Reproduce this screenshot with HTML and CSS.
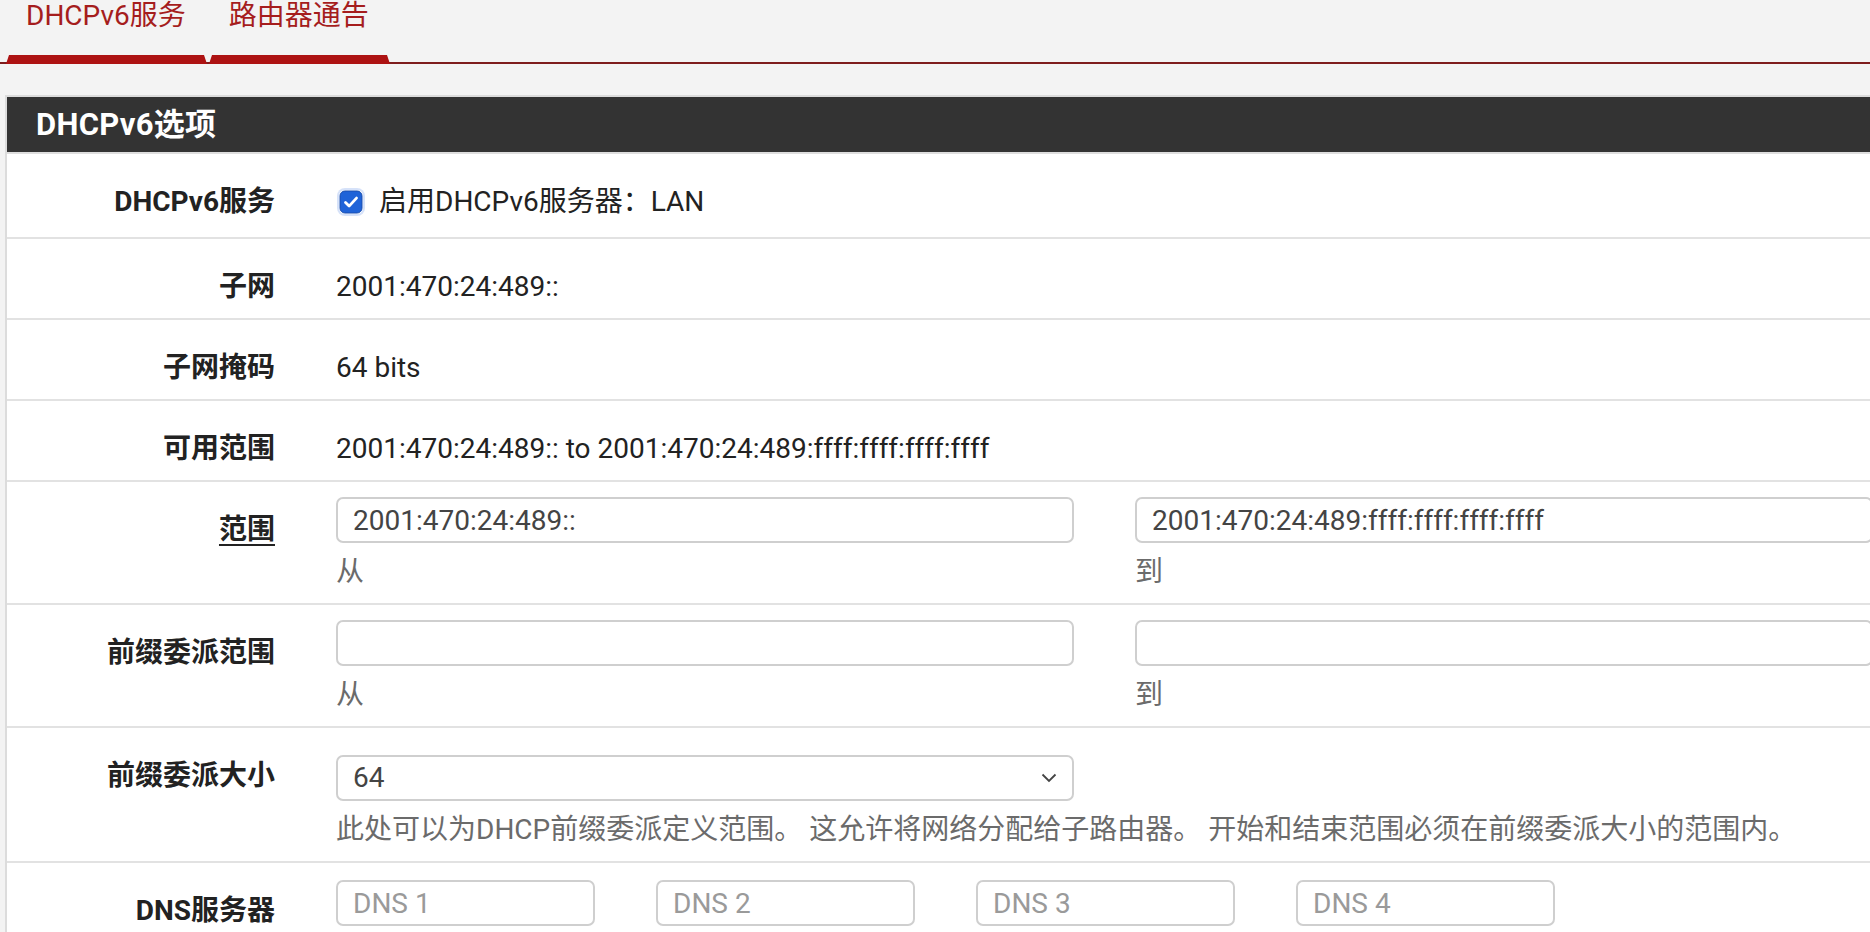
FILE: index.html
```html
<!DOCTYPE html>
<html lang="zh-CN">
<head>
<meta charset="utf-8">
<title>DHCPv6服务</title>
<link rel="stylesheet" href="styles.css">
</head>
<body>
<div class="page">
  <ul class="tabs">
    <li class="tab"><a href="#">DHCPv6服务</a></li>
    <li class="tab"><a href="#">路由器通告</a></li>
  </ul>

  <section class="panel">
    <header class="panel-heading"><h2>DHCPv6选项</h2></header>
    <div class="panel-body">
      <div class="row row-check">
        <div class="label">DHCPv6服务</div>
        <div class="value">
          <label class="check">
            <span class="box"><svg viewBox="0 0 24 24" width="24" height="24"><rect x="1" y="1" width="22" height="22" rx="5" fill="#1f63d8" stroke="#1a4fb0" stroke-width="1"/><path d="M6.5 12.5l3.6 3.6 7.4-8" fill="none" stroke="#fff" stroke-width="2.8" stroke-linecap="round" stroke-linejoin="round"/></svg></span>
            <span>启用DHCPv6服务器：LAN</span>
          </label>
        </div>
      </div>
      <div class="row">
        <div class="label">子网</div>
        <div class="value static">2001:470:24:489::</div>
      </div>
      <div class="row">
        <div class="label">子网掩码</div>
        <div class="value static">64 bits</div>
      </div>
      <div class="row">
        <div class="label">可用范围</div>
        <div class="value static">2001:470:24:489:: to 2001:470:24:489:ffff:ffff:ffff:ffff</div>
      </div>
      <div class="row">
        <div class="label"><span class="link">范围</span></div>
        <div class="value pair">
          <div class="field">
            <input class="input" type="text" value="2001:470:24:489::">
            <div class="help">从</div>
          </div>
          <div class="field">
            <input class="input" type="text" value="2001:470:24:489:ffff:ffff:ffff:ffff">
            <div class="help">到</div>
          </div>
        </div>
      </div>
      <div class="row">
        <div class="label">前缀委派范围</div>
        <div class="value pair">
          <div class="field">
            <input class="input" type="text" value="">
            <div class="help">从</div>
          </div>
          <div class="field">
            <input class="input" type="text" value="">
            <div class="help">到</div>
          </div>
        </div>
      </div>
      <div class="row">
        <div class="label">前缀委派大小</div>
        <div class="value single select-wrap">
          <div class="field">
            <div class="select">
              <span>64</span>
              <svg class="chev" viewBox="0 0 16 10" width="16" height="10"><path d="M1.5 1.5l6.5 6.5 6.5-6.5" fill="none" stroke="#444" stroke-width="1.8"/></svg>
            </div>
            <div class="help wide">此处可以为DHCP前缀委派定义范围。 这允许将网络分配给子路由器。 开始和结束范围必须在前缀委派大小的范围内。</div>
          </div>
        </div>
      </div>
      <div class="row">
        <div class="label">DNS服务器</div>
        <div class="value quad">
          <input class="input" type="text" placeholder="DNS 1">
          <input class="input" type="text" placeholder="DNS 2">
          <input class="input" type="text" placeholder="DNS 3">
          <input class="input" type="text" placeholder="DNS 4">
        </div>
      </div>
    </div>
  </section>
</div>
</body>
</html>
```
FILE: styles.css
```css
html, body {
  margin: 0;
  padding: 0;
  overflow: hidden;
  background: #f3f3f3;
}
body {
  font-family: "Roboto", "Noto Sans CJK SC", sans-serif;
  font-size: 28px;
  line-height: 40px;
  color: #222;
}
.page {
  width: 1900px;
}

/* tabs */
.tabs {
  list-style: none;
  margin: 0;
  padding: 0 0 0 6px;
  display: flex;
  border-bottom: 2px solid #7e1c1c;
}
.tab {
  margin-right: 2px;
  margin-bottom: -2px;
}
.tab a {
  display: block;
  padding: 0 18px 23px 17px;
  line-height: 32px;
  color: #a51d1d;
  text-decoration: none;
  border-bottom: 9px solid #ad1212;
  border-left: 3px solid transparent;
  border-right: 3px solid transparent;
}

/* panel */
.panel {
  margin: 31px 0 0 5px;
  border-top: 2px solid #dcdcdc;
  border-left: 2px solid #dcdcdc;
  background: #fff;
}
.panel-heading {
  background: #333;
  height: 55px;
  display: flex;
  align-items: center;
  padding-left: 29px;
  border-bottom: 2px solid #dedede;
}
.panel-heading h2 {
  margin: 0;
  color: #fff;
  font-size: 31px;
  font-weight: 700;
  letter-spacing: 0.3px;
  line-height: 40px;
}

.row {
  display: flex;
  padding: 15px 0 11px;
  border-top: 2px solid #e2e2e2;
}
.row:first-child {
  border-top: 0;
}
.row-check {
  padding-bottom: 15px;
}
.label {
  width: 268px;
  flex: none;
  text-align: right;
  font-weight: 700;
  padding-top: 13px;
  margin-right: 61px;
}
.link {
  text-decoration: underline;
  text-decoration-thickness: 2px;
  text-underline-offset: 5px;
}
.value.static {
  padding-top: 13px;
}
.check {
  display: flex;
  align-items: center;
  padding-top: 13px;
  gap: 16px;
  margin-left: 3px;
}
.box {
  display: block;
  width: 24px;
  height: 24px;
  border-radius: 6px;
  box-shadow: 0 0 0 2px rgba(90, 140, 230, 0.25);
}
.box svg {
  display: block;
}

.pair {
  display: grid;
  grid-template-columns: 738px 738px;
  column-gap: 61px;
}
.single {
  width: 738px;
}
.select-wrap {
  padding-top: 12px;
}
.input, .select {
  box-sizing: border-box;
  height: 46px;
  width: 100%;
  border: 2px solid #cfcfcf;
  border-radius: 7px;
  padding: 0 15px;
  font-family: "Roboto", "Noto Sans CJK SC", sans-serif;
  font-size: 28px;
  color: #444;
  background: #fff;
  outline: none;
  margin: 0;
  display: block;
}
.input::placeholder {
  color: #9a9a9a;
}
.select {
  display: flex;
  align-items: center;
  justify-content: space-between;
  padding-right: 15px;
}
.chev {
  display: block;
}
.help {
  margin-top: 9px;
  color: #6b6b6b;
  line-height: 40px;
}
.help.wide {
  width: 1500px;
  white-space: nowrap;
}
.quad {
  display: flex;
  gap: 61px;
  padding-top: 2px;
}
.quad .input {
  width: 259px;
}
```
